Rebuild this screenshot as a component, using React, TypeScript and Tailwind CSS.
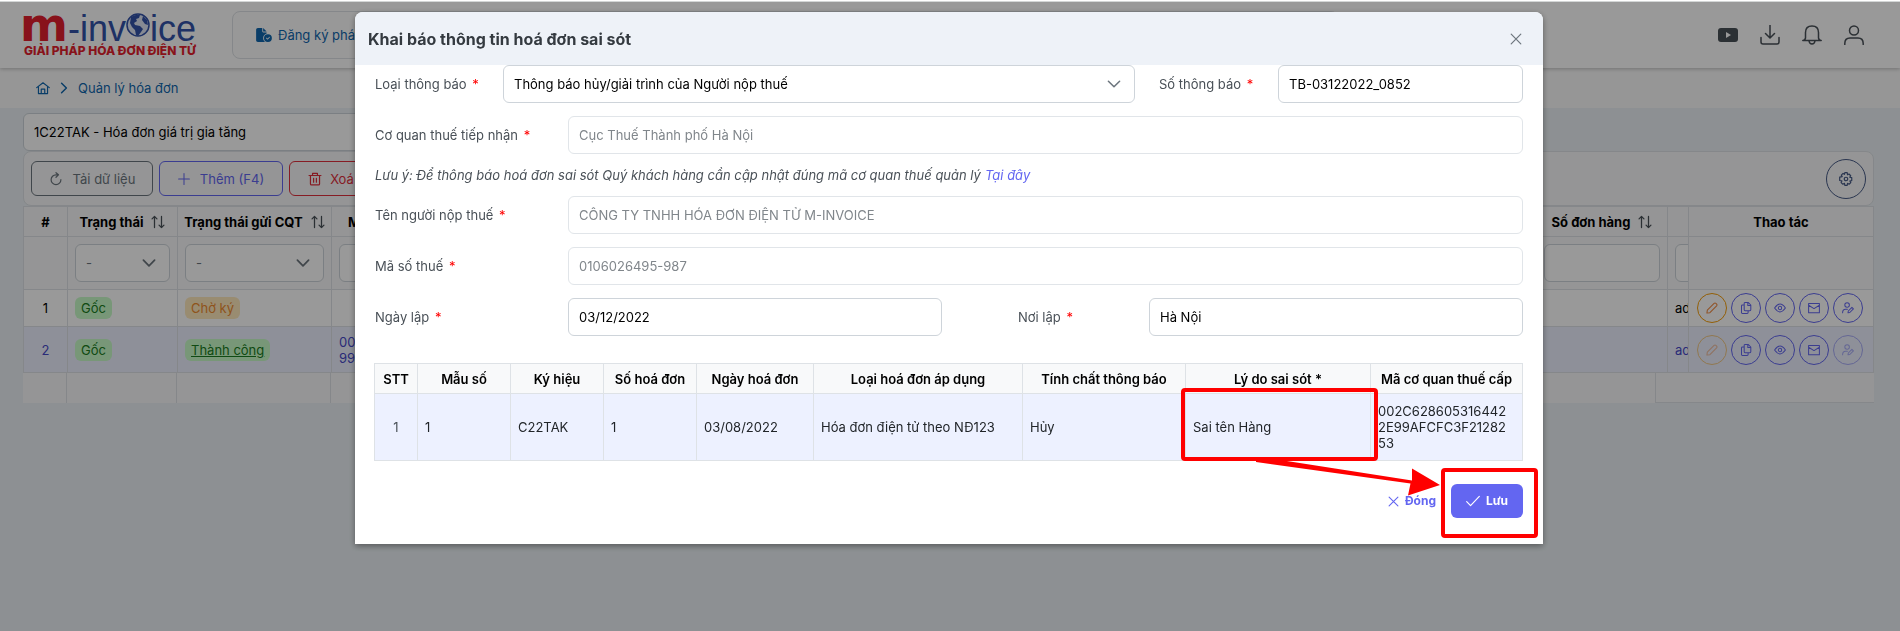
import React from "react";
import { FaFileCircleCheck } from "react-icons/fa6";

type IconName =
  | "home" | "right" | "down" | "refresh" | "plus" | "trash" | "sort" | "close" | "check"
  | "download" | "bell" | "user" | "cog" | "pencil" | "copy" | "eye" | "mail" | "useredit";

const ICONS: Record<IconName, React.ReactNode> = {
  home: <path d="M1 9.5 10 2.5l9 7M3.5 8v10h13V8M7.5 18v-6.5h5V18" />,
  right: <path d="m6 2 8 8-8 8" />,
  down: <path d="m2 6 8 8 8-8" />,
  refresh: <path d="M17 11a7 7 0 1 1-7-7h3M10 1l3.500 3L10 7.500" />,
  plus: <path d="M10 1v18M1 10h18" />,
  trash: <path d="M1.500 5h17M6.500 5V2h7v3M3.500 5v12q0 1.500 1.500 1.500h10q1.500 0 1.500-1.500V5M8 9v5.500M12 9v5.500" />,
  sort: <path d="M5 18V2M1.500 5.500 5 2l3.500 3.500M15 2v16M11.500 14.500 15 18l3.500-3.500" />,
  close: <path d="m2 2 16 16M18 2 2 18" />,
  check: <path d="m1 11 5.500 5.500L19 3.500" />,
  download: <path d="M10 0v12.500M5.500 8.500 10 13l4.500-4.500M1 12.500V17q0 2 2 2h14q2 0 2-2v-4.500" />,
  bell: <path d="M.800 15.500q2.200 0 2.700-2.500V7.500Q3.500 1 10 1t6.500 6.500V13q.500 2.500 2.700 2.500zM7 16q.500 3 3 3t3-3" />,
  user: (
    <>
      <circle cx="10" cy="5.500" r="4.500" />
      <path d="M.800 19.500v-1Q.800 13 6 13h8q5.200 0 5.200 5.500v1" />
    </>
  ),
  cog: (
    <>
      <path d="m8.300 1-.500 2.300-2-1.300L3.300 4.500l1.300 2L1 7.300v4.800l3.100.600-1.100 2.500 2.600 2.300 2.200-1.300.500 2.800h3.400l.500-2.800 2.200 1.300 2.400-2.400-1.300-2.200 2.700-.600V8l-2.800-.500 1.300-2.200-2.400-2.400-2.100 1.100L11.700 1z" />
      <circle cx="10" cy="10" r="2.500" />
    </>
  ),
  pencil: <path d="m1.500 18.500.700-5L13.500 2.300q1.500-1.300 3 0l1.200 1.200q1.300 1.500 0 3L6.500 17.800z" />,
  copy: <path d="M8 1h6l4 4v8q0 1.500-1.500 1.500H8.500Q7 14.500 7 13V2q0-1 1-1zM13 1v5h5M7 5H4Q2.500 5 2.500 6.500v11Q2.500 19 4 19h8q1.500 0 1.500-1.500v-3" />,
  eye: (
    <>
      <path d="M1 10q9-13 18 0-9 13-18 0z" />
      <circle cx="10" cy="10" r="2.800" />
    </>
  ),
  mail: <path d="M1 2.500h18v15.500H1zM1 5.500l9 5.500 9-5.500" />,
  useredit: (
    <>
      <circle cx="8.500" cy="5" r="3.800" />
      <path d="M1 18q0-6 5-6h3M10 18l.500-3 6-6 2.500 2.500-6 6z" />
    </>
  ),
};

function Icon({ name, className, weight = 1.7 }: { name: IconName; className: string; weight?: number }) {
  return (
    <svg viewBox="0 0 20 20" className={`shrink-0 ${className}`} fill="none" stroke="currentColor" strokeWidth={weight} strokeLinecap="round" strokeLinejoin="round" aria-hidden="true">
      {ICONS[name]}
    </svg>
  );
}

function Logo() {
  return (
    <a href="#" aria-label="m-invoice" className="block w-[176px] shrink-0">
      <span className="flex h-7 items-baseline font-['Liberation_Sans'] text-[36px] leading-7 text-[#3252a8]">
        <span className="-ml-1 font-['DejaVu_Sans'] text-[46px] font-bold text-[#e31e2d]">m</span>
        <span>-inv</span>
        <svg viewBox="0 0 24 24" className="h-6 w-6 shrink-0 self-center" aria-hidden="true">
          <circle cx="12" cy="12" r="11" fill="#dfe6f5" stroke="#3252a8" strokeWidth="1.500" />
          <path d="M5 4q5-3 9-2l-1 3-3 1 1 2-3 2 1 2 5 1 3 3-2 3-3 4-2-1-1-5-3-3-2-4zM17 3l4 4 1 5-3-1-3-4z" fill="#3252a8" />
        </svg>
        <span>ice</span>
      </span>
      <span className="mt-1 block whitespace-nowrap font-['Inter'] text-xs font-extrabold leading-4 text-[#e31e2d]">GIẢI PHÁP HÓA ĐƠN ĐIỆN TỬ</span>
    </a>
  );
}

function TopBar() {
  return (
    <header className="relative flex h-[66px] items-center bg-white pl-6 pr-9 shadow-[0_1px_4px_rgba(0,0,0,0.25)]">
      <Logo />
      <nav className="ml-8 mr-auto flex h-12 w-[1107px] items-center rounded-lg border border-[#dee2e6] bg-[#fdfdfd] px-[23px]">
        <a href="#" className="flex items-center gap-1.5 text-[#0f66ad]">
          <FaFileCircleCheck className="h-3.5 w-4" />
          Đăng ký phát hành
        </a>
      </nav>
      <div className="flex items-center gap-[22px] text-[#495057]">
        <button aria-label="Video">
          <svg viewBox="0 0 20 14" className="h-3.5 w-5" aria-hidden="true">
            <rect width="20" height="14" rx="3" fill="currentColor" />
            <path d="m8 4 5 3-5 3z" fill="#fff" />
          </svg>
        </button>
        <button aria-label="Tải xuống"><Icon name="download" className="h-5 w-5" weight={1.5} /></button>
        <button aria-label="Thông báo"><Icon name="bell" className="h-5 w-5" weight={1.5} /></button>
        <button aria-label="Tài khoản"><Icon name="user" className="h-5 w-5" weight={1.5} /></button>
      </div>
    </header>
  );
}

const cell = "border border-[#dee2e6]";

function Sortable({ children }: { children: React.ReactNode }) {
  return (
    <span className="flex items-center justify-center gap-2 whitespace-nowrap">
      {children}
      <Icon name="sort" className="h-3.5 w-3.5 text-[#495057]" weight={1.8} />
    </span>
  );
}

function FilterSelect({ label }: { label: string }) {
  return (
    <div className="relative">
      <select aria-label={label} className="h-[38px] w-full appearance-none rounded-md border border-[#ced4da] bg-white px-2.5 text-[#6c757d]">
        <option>-</option>
      </select>
      <Icon name="down" className="pointer-events-none absolute right-3.5 top-3 h-3.5 w-3.5 text-[#6c757d]" weight={2.5} />
    </div>
  );
}

function FilterInput({ label }: { label: string }) {
  return <input aria-label={label} className="h-[38px] w-full rounded-md border border-[#ced4da] bg-white px-2.5" />;
}

function Tag({ tone, children }: { tone: "green" | "orange"; children: React.ReactNode }) {
  const tones = { green: "bg-[#c8fcc8] text-[#1b7d22]", orange: "bg-[#ffe9bd] text-[#ee8b2f]" };
  return <span className={`inline-block rounded-md px-1.5 py-px leading-5 ${tones[tone]}`}>{children}</span>;
}

const ACTIONS: { icon: IconName; label: string }[] = [
  { icon: "pencil", label: "Sửa" },
  { icon: "copy", label: "Sao chép" },
  { icon: "eye", label: "Xem" },
  { icon: "mail", label: "Gửi thư" },
  { icon: "useredit", label: "Ký" },
];

function RowActions({ faded }: { faded?: boolean }) {
  return (
    <div className="flex gap-1">
      {ACTIONS.map(({ icon, label }) => {
        const color = icon === "pencil" ? "border-[#f59e0b] text-[#f0883e]" : "border-[#6366f1] text-[#6366f1]";
        const dim = faded && (icon === "pencil" || icon === "useredit") ? "opacity-50" : "";
        return (
          <button key={icon} aria-label={label} className={`flex h-[30px] w-[30px] items-center justify-center rounded-full border ${color} ${dim}`}>
            <Icon name={icon} className="h-3 w-3" />
          </button>
        );
      })}
    </div>
  );
}

function InvoiceTable() {
  return (
    <div>
      <table className="w-full table-fixed border-collapse bg-[#f8f9fa]">
        <colgroup>
          <col className="w-11" />
          <col className="w-[110px]" />
          <col className="w-[154px]" />
          <col />
          <col className="w-[131px]" />
          <col className="w-[21px]" />
          <col className="w-[185px]" />
        </colgroup>
        <thead>
          <tr className="h-[30px] font-semibold text-black">
            <th className={cell}>#</th>
            <th className={cell}><Sortable>Trạng thái</Sortable></th>
            <th className={cell}><Sortable>Trạng thái gửi CQT</Sortable></th>
            <th className={`${cell} pl-4 text-left`}>Mã CQT cấp</th>
            <th className={cell}><Sortable>Số đơn hàng</Sortable></th>
            <th className={cell} />
            <th className={cell}>Thao tác</th>
          </tr>
          <tr className="h-[53px]">
            <td className={cell} />
            <td className={`${cell} px-[7px]`}><FilterSelect label="Lọc trạng thái" /></td>
            <td className={`${cell} px-[7px]`}><FilterSelect label="Lọc trạng thái gửi CQT" /></td>
            <td className={`${cell} px-[7px]`}><FilterInput label="Lọc mã CQT cấp" /></td>
            <td className={`${cell} px-[7px]`}><FilterInput label="Lọc số đơn hàng" /></td>
            <td className={`${cell} overflow-hidden pl-[7px]`}><div className="w-24"><FilterInput label="Lọc người tạo" /></div></td>
            <td className={cell} />
          </tr>
        </thead>
        <tbody>
          <tr className="h-[37px] bg-white text-black">
            <td className={`${cell} text-center`}>1</td>
            <td className={`${cell} px-[7px]`}><Tag tone="green">Gốc</Tag></td>
            <td className={`${cell} px-[7px]`}><Tag tone="orange">Chờ ký</Tag></td>
            <td className={cell} />
            <td className={cell} />
            <td className={`${cell} overflow-hidden pl-[7px]`}>admin</td>
            <td className={`${cell} pl-2`}><RowActions /></td>
          </tr>
          <tr className="h-[46px] bg-[#edf1ff] text-[#4648c9]">
            <td className={`${cell} text-center`}>2</td>
            <td className={`${cell} px-[7px]`}><Tag tone="green">Gốc</Tag></td>
            <td className={`${cell} px-[7px]`}><Tag tone="green"><a href="#" className="underline">Thành công</a></Tag></td>
            <td className={`${cell} px-[7px] leading-4`}>002C6286053164422E<br />99AFCFC3F2128253</td>
            <td className={cell} />
            <td className={`${cell} overflow-hidden pl-[7px]`}>admin</td>
            <td className={`${cell} pl-2`}><RowActions faded /></td>
          </tr>
        </tbody>
      </table>
      <div className="flex h-[30px] bg-[#f8f9fa]">
        <div className="w-11 border-r border-[#dee2e6]" />
        <div className="w-[110px] border-r border-[#dee2e6]" />
        <div className="w-[154px] border-r border-[#dee2e6]" />
        <div className="flex-1" />
        <div className="w-[219px] border-b border-l border-[#dee2e6]" />
      </div>
    </div>
  );
}

function InvoicePage() {
  return (
    <>
      <nav className="flex h-10 items-center gap-2 bg-[#fbfbfb] pl-9 text-[#0f66ad]" aria-label="Breadcrumb">
        <a href="#" aria-label="Trang chủ"><Icon name="home" className="h-3.5 w-3.5" /></a>
        <Icon name="right" className="h-3 w-3" weight={2.5} />
        <a href="#">Quản lý hóa đơn</a>
      </nav>
      <main className="pl-[23px] pr-[26px] pt-[5px]">
        <select aria-label="Ký hiệu hóa đơn" className="block h-[38px] w-1/2 appearance-none rounded-md border border-[#ced4da] bg-white px-2.5 text-black">
          <option>1C22TAK - Hóa đơn giá trị gia tăng</option>
        </select>
        <div className="flex h-[55px] items-center gap-1.5 rounded-lg border border-[#dee2e6] bg-[#f8f9fa] px-[7px]">
          <button className="flex h-[35px] w-[122px] items-center justify-center gap-2.5 rounded-md border border-[#6c757d] text-[#6c757d]">
            <Icon name="refresh" className="h-3.5 w-3.5" />Tải dữ liệu
          </button>
          <button className="flex h-[35px] w-[124px] items-center justify-center gap-2.5 rounded-md border border-[#6366f1] text-[#6366f1]">
            <Icon name="plus" className="h-3 w-3" />Thêm (F4)
          </button>
          <button className="flex h-[35px] w-[84px] items-center justify-center gap-2 rounded-md border border-[#e02f3c] text-[#e02f3c]">
            <Icon name="trash" className="h-3.5 w-3.5" />Xoá
          </button>
          <button aria-label="Cài đặt" className="ml-auto flex h-10 w-10 items-center justify-center rounded-full border border-[#475a86] text-[#475a86]">
            <Icon name="cog" className="h-3.5 w-3.5" />
          </button>
        </div>
        <InvoiceTable />
      </main>
    </>
  );
}

const field = "h-[38px] w-full min-w-0 rounded-md border px-2.5";
const active = "border-[#ced4da] bg-white text-black";
const locked = "border-[#e1e5e9] bg-white text-[#80868b]";

function Label({ htmlFor, children, className = "" }: { htmlFor: string; children: string; className?: string }) {
  return (
    <label htmlFor={htmlFor} className={`shrink-0 whitespace-nowrap text-[#495057] ${className}`}>
      {children} <span className="ml-0.5 text-[#ff0000]">*</span>
    </label>
  );
}

const COLUMNS = [
  { title: "STT", value: "1", width: "w-[43px]" },
  { title: "Mẫu số", value: "1", width: "w-[93px]" },
  { title: "Ký hiệu", value: "C22TAK", width: "w-[93px]" },
  { title: "Số hoá đơn", value: "1", width: "w-[93px]" },
  { title: "Ngày hoá đơn", value: "03/08/2022", width: "w-[117px]" },
  { title: "Loại hoá đơn áp dụng", value: "Hóa đơn điện tử theo NĐ123", width: "w-[209px]" },
  { title: "Tính chất thông báo", value: "Hủy", width: "w-[163px]" },
  { title: "Lý do sai sót *", value: "Sai tên Hàng", width: "w-[185px]" },
  { title: "Mã cơ quan thuế cấp", value: "002C6286053164422E99AFCFC3F2128253", width: "" },
];

function ErrorTable() {
  return (
    <div className="-ml-px mt-[27px]">
      <table className="w-full table-fixed border-collapse">
        <colgroup>
          {COLUMNS.map((c) => <col key={c.title} className={c.width} />)}
        </colgroup>
        <thead>
          <tr className="h-[30px] bg-[#f8f9fa] text-black">
            {COLUMNS.map((c) => <th key={c.title} className={`${cell} whitespace-nowrap font-semibold`}>{c.title}</th>)}
          </tr>
        </thead>
        <tbody>
          <tr className="h-[67px] bg-[#edf1ff] text-[#212529]">
            {COLUMNS.map((c, i) => (
              <td key={c.title} className={`${cell} break-all pl-[7px] leading-4 ${i === 0 ? "pr-[7px] text-center text-[#495057]" : "pr-3"}`}>{c.value}</td>
            ))}
          </tr>
        </tbody>
      </table>
    </div>
  );
}

function Dialog() {
  return (
    <div role="dialog" aria-labelledby="dialog-title" className="relative w-full max-w-[1188px] rounded-t-lg bg-white shadow-[0_2px_6px_rgba(0,0,0,0.4)]">
      <div className="flex h-[53px] items-center justify-between rounded-t-lg bg-[#eef2f8] pl-[13px] pr-[21px]">
        <h2 id="dialog-title" className="text-base font-bold text-[#343a40]">Khai báo thông tin hoá đơn sai sót</h2>
        <button aria-label="Đóng cửa sổ" className="text-[#6c757d]"><Icon name="close" className="h-3 w-3" weight={2} /></button>
      </div>
      <form className="px-5 pb-[26px]" onSubmit={(e) => e.preventDefault()}>
        <div className="flex items-center">
          <Label htmlFor="kind" className="w-32">Loại thông báo</Label>
          <div className="relative flex-1">
            <select id="kind" className={`${field} ${active} appearance-none`}>
              <option>Thông báo hủy/giải trình của Người nộp thuế</option>
            </select>
            <Icon name="down" className="pointer-events-none absolute right-3.5 top-3 h-3.5 w-3.5 text-[#6c757d]" weight={2.2} />
          </div>
          <Label htmlFor="number" className="ml-6 w-[119px]">Số thông báo</Label>
          <div className="w-[245px]"><input id="number" defaultValue="TB-03122022_0852" className={`${field} ${active}`} /></div>
        </div>
        <div className="mt-[13px] flex items-center">
          <Label htmlFor="office" className="w-[193px]">Cơ quan thuế tiếp nhận</Label>
          <input id="office" readOnly value="Cục Thuế Thành phố Hà Nội" className={`${field} ${locked}`} />
        </div>
        <p className="flex h-[42px] items-center gap-1 italic text-[#495057]">
          Lưu ý: Để thông báo hoá đơn sai sót Quý khách hàng cần cập nhật đúng mã cơ quan thuế quản lý
          <a href="#" className="text-[#6366f1]">Tại đây</a>
        </p>
        <div className="flex items-center">
          <Label htmlFor="payer" className="w-[193px]">Tên người nộp thuế</Label>
          <input id="payer" readOnly value="CÔNG TY TNHH HÓA ĐƠN ĐIỆN TỬ M-INVOICE" className={`${field} ${locked}`} />
        </div>
        <div className="mt-[13px] flex items-center">
          <Label htmlFor="taxcode" className="w-[193px]">Mã số thuế</Label>
          <input id="taxcode" readOnly value="0106026495-987" className={`${field} ${locked}`} />
        </div>
        <div className="mt-[13px] flex items-center">
          <Label htmlFor="date" className="w-[193px]">Ngày lập</Label>
          <input id="date" defaultValue="03/12/2022" className={`${field} ${active} flex-1`} />
          <Label htmlFor="place" className="ml-[76px] w-[131px]">Nơi lập</Label>
          <input id="place" defaultValue="Hà Nội" className={`${field} ${active} flex-1`} />
        </div>
        <ErrorTable />
        <div className="mt-[23px] flex items-center justify-end gap-[15px] text-xs font-bold">
          <button type="button" className="flex items-center gap-1.5 text-[#6366f1]"><Icon name="close" className="h-[11px] w-[11px]" weight={2} />Đóng</button>
          <button type="submit" className="flex h-[34px] w-[72px] items-center justify-center gap-1.5 rounded-md bg-[#6366f1] text-white"><Icon name="check" className="h-3.5 w-3.5" />Lưu</button>
        </div>
      </form>
      <div className="pointer-events-none absolute right-[165px] top-[376px] h-[73px] w-[197px] rounded-sm border-4 border-[#ff0000]" />
      <div className="pointer-events-none absolute right-[5px] top-[456px] h-[70px] w-[97px] rounded-sm border-4 border-[#ff0000]" />
      <svg viewBox="0 0 184 40" className="pointer-events-none absolute right-[103px] top-[446px] h-10 w-[184px]" fill="#ff0000" aria-hidden="true">
        <path d="M0 1 18 1 156 22.500 156 10.500 184 27 152 37.500 154.500 25.500 0 4z" />
      </svg>
    </div>
  );
}

export default function App() {
  return (
    <div className="min-h-screen bg-[#ebf1f5] pt-0.5 font-['Inter',sans-serif] text-[13px] leading-5 text-[#495057]">
      <TopBar />
      <InvoicePage />
      <div className="fixed inset-x-0 top-0 h-0.5 border-b border-[#d3d6d6] bg-white" />
      <div className="fixed inset-x-0 bottom-0 top-0.5 flex items-start justify-center bg-black/40 pr-0.5 pt-2.5">
        <Dialog />
      </div>
    </div>
  );
}
